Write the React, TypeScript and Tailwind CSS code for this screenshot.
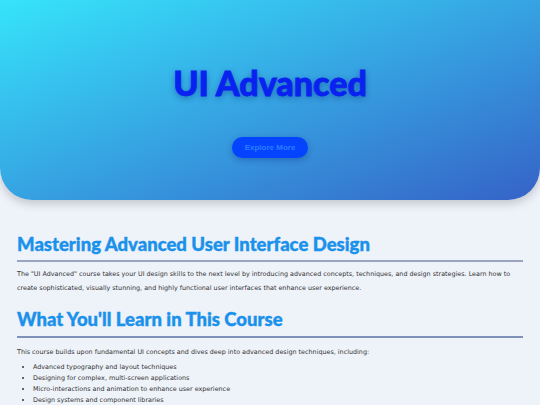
import React from "react";

const topics = [
  "Advanced typography and layout techniques",
  "Designing for complex, multi-screen applications",
  "Micro-interactions and animation to enhance user experience",
  "Design systems and component libraries",
];

const App = () => {
  return (
    <div className="w-[540px] h-[405px] overflow-hidden bg-[#eef2f9] font-['DejaVu_Sans',sans-serif]">
      <header className="h-[200px] rounded-b-[32px] bg-gradient-to-br from-[#36e4fa] to-[#3562c7] shadow-[0_4px_10px_rgba(0,0,0,0.18)] flex flex-col items-center">
        <h1 className="mt-[63px] font-['Lato',sans-serif] text-[34px] leading-[40px] font-black text-[#0a22f0] [-webkit-text-stroke:0.8px_#0a22f0] [text-shadow:0_2px_6px_rgba(0,30,120,0.45)]">
          UI Advanced
        </h1>
        <button
          type="button"
          className="mt-[34px] w-[76px] h-[21px] rounded-full bg-[#0544ff] text-[#2c7cff] text-[8px] font-bold font-['Liberation_Sans',sans-serif] shadow-[0_2px_6px_rgba(0,20,120,0.3)]"
        >
          Explore More
        </button>
      </header>

      <main className="px-[17px] pt-[33px]">
        <h2 className="font-['Lato',sans-serif] text-[18.5px] leading-[22px] font-black text-[#1a91ea] [-webkit-text-stroke:0.4px_#1a91ea]">
          Mastering Advanced User Interface Design
        </h2>
        <div className="mt-[5px] h-[2px] bg-[#9aa4bf]" />
        <p className="mt-[5px] text-[6.4px] leading-[14px] text-[#333]">
          The "UI Advanced" course takes your UI design skills to the next level by introducing advanced
          concepts, techniques, and design strategies. Learn how to create sophisticated, visually stunning,
          and highly functional user interfaces that enhance user experience.
        </p>

        <h2 className="mt-[12px] font-['Lato',sans-serif] text-[18.5px] leading-[24px] font-black text-[#1a91ea] [-webkit-text-stroke:0.4px_#1a91ea]">
          What You'll Learn in This Course
        </h2>
        <div className="mt-[5px] h-[2px] bg-[#7f91b8]" />
        <p className="mt-[7px] text-[6.4px] leading-[14px] text-[#333]">
          This course builds upon fundamental UI concepts and dives deep into advanced design techniques, including:
        </p>
        <ul className="mt-[3px] pl-[16px] list-disc text-[6.4px] leading-[11px] text-[#333]">
          {topics.map((t) => (
            <li key={t}>{t}</li>
          ))}
        </ul>
      </main>
    </div>
  );
};

export default App;
